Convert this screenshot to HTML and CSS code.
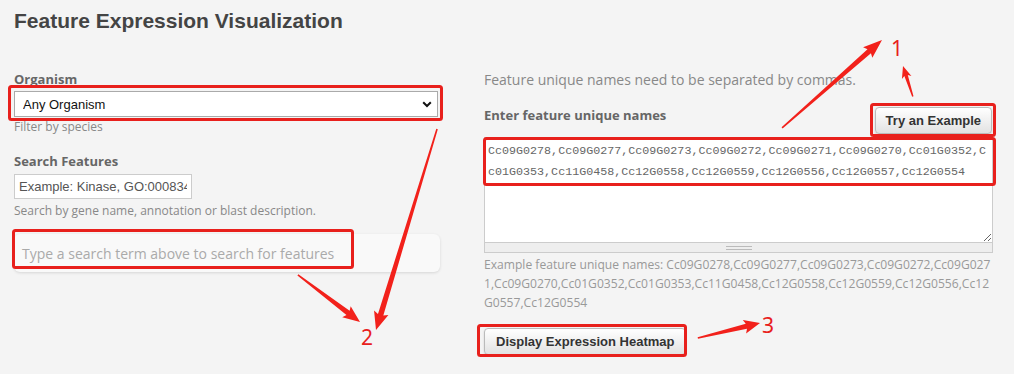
FILE: index.html
```html
<!DOCTYPE html>
<html lang="en">
<head>
    <meta charset="UTF-8">
    <meta name="viewport" content="width=device-width, initial-scale=1.0">
    <title>Feature Expression Visualization</title>
    <link rel="stylesheet" href="styles.css">
</head>
<body>
    <div class="page">
        <h1>Feature Expression Visualization</h1>

        <div class="columns">
            <div class="search-col">
                <label class="field-label" for="organism">Organism</label>
                <div class="select-wrap">
                    <select id="organism">
                        <option>Any Organism</option>
                    </select>
                    <svg class="chevron" width="10" height="7" viewBox="0 0 10 7">
                        <path d="M1.2 1.2 L5 5 L8.8 1.2" fill="none" stroke="#111" stroke-width="2"/>
                    </svg>
                </div>
                <div class="help">Filter by species</div>

                <label class="field-label features-label" for="search">Search Features</label>
                <input id="search" class="search-input" type="text" placeholder="Example: Kinase, GO:0008347">
                <div class="help search-help">Search by gene name, annotation or blast description.</div>

                <div class="results">Type a search term above to search for features</div>
            </div>

            <div class="names-col">
                <p class="note">Feature unique names need to be separated by commas.</p>
                <div class="names-head">
                    <label class="field-label" for="names">Enter feature unique names</label>
                    <button class="btn try-btn">Try an Example</button>
                </div>
                <textarea id="names">Cc09G0278,Cc09G0277,Cc09G0273,Cc09G0272,Cc09G0271,Cc09G0270,Cc01G0352,Cc01G0353,Cc11G0458,Cc12G0558,Cc12G0559,Cc12G0556,Cc12G0557,Cc12G0554</textarea>
                <div class="grip"><span></span></div>
                <p class="example">Example feature unique names: Cc09G0278,Cc09G0277,Cc09G0273,Cc09G0272,Cc09G0271,Cc09G0270,Cc01G0352,Cc01G0353,Cc11G0458,Cc12G0558,Cc12G0559,Cc12G0556,Cc12G0557,Cc12G0554</p>
                <button class="btn heatmap-btn">Display Expression Heatmap</button>
            </div>
        </div>
    </div>

    <!-- red markup drawn on top of the screenshot -->
    <svg class="annotations" width="1014" height="374" viewBox="0 0 1014 374">
        <g fill="none" stroke="#e8201c" stroke-width="3">
            <rect x="9.5" y="86.5" width="432" height="33" rx="2"/>
            <rect x="13.5" y="230.5" width="339" height="37" rx="2"/>
            <rect x="871.5" y="104.5" width="123" height="31" rx="2"/>
            <rect x="484.5" y="138.5" width="510" height="46" rx="2"/>
            <rect x="478.5" y="325.5" width="207" height="30" rx="2"/>
        </g>
        <g fill="#f2211b">
            <g transform="translate(882 40) rotate(-41.3)">
                <polygon points="-133,-0.8 -17,-2.6 -19,-7 0,0 -19,7 -17,2.6 -133,0.8"/>
            </g>
            <g transform="translate(903 66) rotate(-107.9)">
                <polygon points="-32,-0.7 -10,-1.8 -12,-5 0,0 -12,5 -10,1.8 -32,0.7"/>
            </g>
            <g transform="translate(360 322) rotate(37.2)">
                <polygon points="-78,-0.8 -15,-2.6 -17,-7 0,0 -17,7 -15,2.6 -78,0.8"/>
            </g>
            <g transform="translate(376 330) rotate(106.9)">
                <polygon points="-210,-0.8 -16,-2.8 -18,-7.5 0,0 -18,7.5 -16,2.8 -210,0.8"/>
            </g>
            <g transform="translate(760 323) rotate(-13.6)">
                <polygon points="-64,-0.8 -14,-2.6 -16,-7 0,0 -16,7 -14,2.6 -64,0.8"/>
            </g>
        </g>
        <g class="marks" fill="#e8201c" text-anchor="middle">
            <text x="897" y="56">1</text>
            <text x="367" y="345">2</text>
            <text x="768" y="333">3</text>
        </g>
    </svg>
</body>
</html>
```

FILE: styles.css
```css
body {
    margin: 0;
    background: #f4f4f4;
    font-family: 'Open Sans', sans-serif;
    color: #555;
}

.page {
    padding: 9px 21px 0 14px;
}

h1 {
    margin: 0;
    font-family: 'Liberation Sans', Arial, sans-serif;
    font-size: 21px;
    line-height: 24px;
    font-weight: bold;
    color: #444;
}

.columns {
    display: grid;
    grid-template-columns: 426px 509px;
    column-gap: 44px;
    margin-top: 37px;
}

.search-col,
.names-col {
    display: flex;
    flex-direction: column;
    align-items: flex-start;
}

.field-label {
    display: block;
    font-size: 13px;
    line-height: 18px;
    font-weight: 700;
    color: #666;
}

.select-wrap {
    position: relative;
    margin-top: 3px;
}

.select-wrap select {
    display: block;
    width: 424px;
    height: 26px;
    margin: 0;
    padding: 0 8px;
    border: 1px solid #aaa;
    border-radius: 0;
    background: #fff;
    font-family: 'Liberation Sans', Arial, sans-serif;
    font-size: 13px;
    color: #111;
    appearance: none;
}

.chevron {
    position: absolute;
    right: 6px;
    top: 10px;
}

.help {
    margin-top: 1px;
    font-size: 12px;
    line-height: 17px;
    color: #888;
}

.features-label {
    margin-top: 17px;
}

.search-input {
    margin: 4px 0 0;
    width: 178px;
    height: 25px;
    box-sizing: border-box;
    padding: 0 4px;
    border: 1px solid #ccc;
    background: #fff;
    font-family: 'Liberation Sans', Arial, sans-serif;
    font-size: 13px;
}

.search-input::placeholder {
    color: #555;
}

.search-help {
    margin-top: 3px;
}

.results {
    align-self: stretch;
    display: flex;
    align-items: center;
    height: 38px;
    margin-top: 15px;
    padding: 0 8px;
    background: #f9f9f9;
    border-radius: 6px;
    box-shadow: 0 1px 3px rgba(0, 0, 0, 0.12);
    font-size: 14px;
    color: #aaa;
}

.note {
    margin: 0;
    font-size: 14px;
    line-height: 20px;
    color: #888;
}

.names-head {
    align-self: stretch;
    display: flex;
    justify-content: space-between;
    align-items: flex-start;
    height: 28px;
    margin-top: 16px;
}

.btn {
    height: 27px;
    padding: 0 10px;
    border: 1px solid #bbb;
    border-radius: 4px;
    background: linear-gradient(#ffffff, #e2e2e2);
    box-shadow: 0 1px 2px rgba(0, 0, 0, 0.15);
    font-family: 'Liberation Sans', Arial, sans-serif;
    font-size: 13px;
    font-weight: bold;
    color: #333;
    cursor: pointer;
}

.try-btn {
    margin: 1px 1px 0 0;
}

textarea {
    display: block;
    align-self: stretch;
    box-sizing: border-box;
    height: 106px;
    margin: 3px 0 0;
    padding: 3px 4px 3px 3px;
    border: 1px solid #ccc;
    background: #fff;
    font-family: 'Liberation Mono', monospace;
    font-size: 11.7px;
    line-height: 21px;
    color: #666;
    resize: vertical;
}

.grip {
    align-self: stretch;
    display: flex;
    justify-content: center;
    align-items: center;
    height: 9px;
    background: #eee;
    border: 1px solid #ccc;
    border-top: none;
}

.grip span {
    width: 26px;
    height: 2px;
    border-top: 1px solid #bbb;
    border-bottom: 1px solid #bbb;
}

.example {
    margin: 2px 0 0;
    font-size: 12.1px;
    line-height: 19px;
    color: #999;
    word-break: break-all;
}

.heatmap-btn {
    margin-top: 16px;
    padding: 0 11px;
}

.annotations {
    position: absolute;
    top: 0;
    left: 0;
    pointer-events: none;
}

.marks {
    font-family: 'Noto Sans', sans-serif;
    font-size: 21px;
}
```
